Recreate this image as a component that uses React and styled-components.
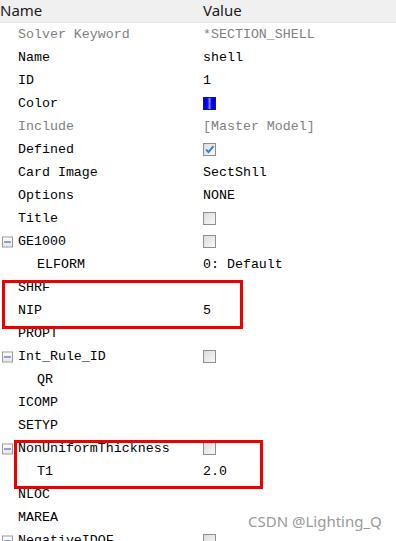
import React from "react";
import styled, { createGlobalStyle } from "styled-components";

const GlobalStyle = createGlobalStyle`
  html, body {
    margin: 0;
    padding: 0;
    background: #ffffff;
  }
`;

const Page = styled.div`
  position: relative;
  width: 396px;
  height: 541px;
  overflow: hidden;
  background: #ffffff;
`;

const Header = styled.div`
  display: grid;
  grid-template-columns: 200px 1fr;
  height: 22px;
  background: #f0f0f0;
  border-bottom: 1px solid #e3e3e3;
  font-family: "Noto Sans", "Open Sans", sans-serif;
  font-size: 15px;
  color: #1a1a1a;
  line-height: 20px;
`;

const HeaderCell = styled.div`
  padding-left: ${(p) => p.$pad}px;
`;

const Row = styled.div`
  display: grid;
  grid-template-columns: 200px 1fr;
  height: 23px;
  align-items: center;
  font-family: "Liberation Mono", "DejaVu Sans Mono", monospace;
  font-size: 13.3px;
  color: ${(p) => (p.$muted ? "#808080" : "#000000")};
`;

const NameCell = styled.div`
  display: flex;
  align-items: center;
  padding-left: ${(p) => (p.$level ? 37 : 18)}px;
  position: relative;
  white-space: nowrap;
`;

const ValueCell = styled.div`
  display: flex;
  align-items: center;
  padding-left: 3px;
  white-space: nowrap;
`;

const Toggle = styled.span`
  position: absolute;
  left: 2px;
  top: 50%;
  transform: translateY(-50%);
  width: 9px;
  height: 9px;
  border: 1px solid #9a9a9a;
  background: linear-gradient(#ffffff, #e6e6e6);
  display: flex;
  align-items: center;
  justify-content: center;
  &::after {
    content: "";
    width: 7px;
    height: 1px;
    background: #2a4fa8;
  }
`;

const Check = styled.span`
  width: 11px;
  height: 11px;
  border: 1px solid #8e8f8f;
  background: linear-gradient(135deg, #dcdcdc, #f8f8f8);
  display: inline-flex;
  align-items: center;
  justify-content: center;
  box-sizing: content-box;
`;

const Swatch = styled.span`
  width: 11px;
  height: 11px;
  border: 1px solid #1a1a6a;
  background: linear-gradient(90deg, #0000f0 0%, #0000ff 30%, #8080ff 50%, #0000ff 70%, #0000f0 100%);
`;

const Highlight = styled.div`
  position: absolute;
  left: ${(p) => p.$x}px;
  top: ${(p) => p.$y}px;
  width: ${(p) => p.$w}px;
  height: ${(p) => p.$h}px;
  border: 3px solid #ee0000;
  box-sizing: border-box;
  pointer-events: none;
`;

const Watermark = styled.div`
  position: absolute;
  left: 248px;
  top: 511px;
  font-family: "Noto Sans", "Open Sans", sans-serif;
  font-size: 15px;
  color: #9a9a9a;
`;

const Tick = () => (
  <svg width="11" height="11" viewBox="0 0 11 11">
    <path d="M2 5.5 L4.5 8.2 L9.5 2.2" fill="none" stroke="#2a7fc0" strokeWidth="1.8" />
  </svg>
);

const rows = [
  { name: "Solver Keyword", value: "*SECTION_SHELL", muted: true },
  { name: "Name", value: "shell" },
  { name: "ID", value: "1" },
  { name: "Color", kind: "swatch" },
  { name: "Include", value: "[Master Model]", muted: true },
  { name: "Defined", kind: "checked" },
  { name: "Card Image", value: "SectShll" },
  { name: "Options", value: "NONE" },
  { name: "Title", kind: "check" },
  { name: "GE1000", kind: "check", group: true },
  { name: "ELFORM", value: "0: Default", level: 1 },
  { name: "SHRF" },
  { name: "NIP", value: "5" },
  { name: "PROPT" },
  { name: "Int_Rule_ID", kind: "check", group: true },
  { name: "QR", level: 1 },
  { name: "ICOMP" },
  { name: "SETYP" },
  { name: "NonUniformThickness", kind: "check", group: true },
  { name: "T1", value: "2.0", level: 1 },
  { name: "NLOC" },
  { name: "MAREA" },
  { name: "NegativeIDOF", kind: "check", group: true },
];

function renderValue(r) {
  if (r.kind === "swatch") return <Swatch />;
  if (r.kind === "check") return <Check />;
  if (r.kind === "checked") return <Check><Tick /></Check>;
  return r.value || "";
}

export default function App() {
  return (
    <Page>
      <GlobalStyle />
      <Header>
        <HeaderCell $pad={0}>Name</HeaderCell>
        <HeaderCell $pad={3}>Value</HeaderCell>
      </Header>
      {rows.map((r) => (
        <Row key={r.name} $muted={r.muted}>
          <NameCell $level={r.level}>
            {r.group && <Toggle />}
            {r.name}
          </NameCell>
          <ValueCell>{renderValue(r)}</ValueCell>
        </Row>
      ))}
      <Highlight $x={2} $y={280} $w={241} $h={49} />
      <Highlight $x={14} $y={440} $w={249} $h={49} />
      <Watermark>CSDN @Lighting_Q</Watermark>
    </Page>
  );
}
